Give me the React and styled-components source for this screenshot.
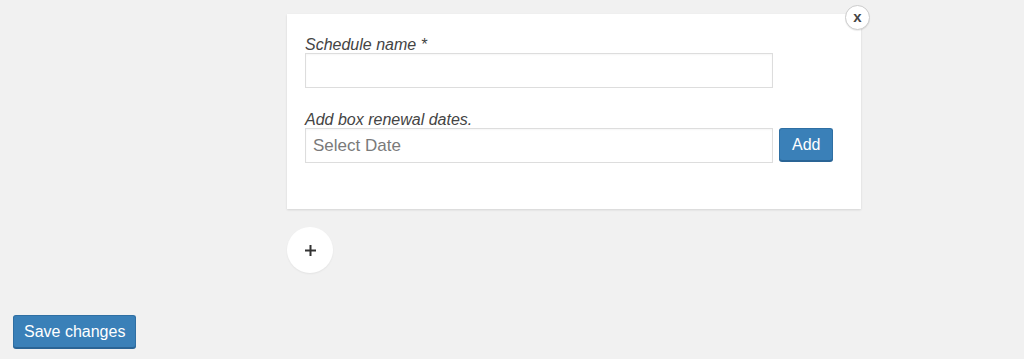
import styled, { createGlobalStyle } from 'styled-components';

const Global = createGlobalStyle`
  html, body { margin: 0; background: #f1f1f1; }
  body { font-family: "Liberation Sans", Arial, sans-serif; color: #444; }
`;

const Page = styled.div`
  width: 1024px;
  height: 359px;
  box-sizing: border-box;
  padding: 14px 0 0 13px;
  display: flex;
  flex-direction: column;
`;

const Schedules = styled.div`
  margin-left: 274px;
  display: flex;
  flex-direction: column;
  align-items: flex-start;
`;

const Card = styled.div`
  position: relative;
  width: 574px;
  height: 195px;
  box-sizing: border-box;
  padding: 22px 18px 0;
  background: #fff;
  box-shadow: 0 1px 2px rgba(0,0,0,0.12);
`;

const Close = styled.button`
  position: absolute;
  top: -9px;
  right: -9px;
  width: 25px;
  height: 25px;
  border-radius: 50%;
  border: 1px solid #ccc;
  background: #fff;
  color: #444;
  font: bold 15px "Liberation Sans", Arial, sans-serif;
  padding: 0 0 2px;
  display: grid;
  place-items: center;
  box-shadow: 0 1px 1px rgba(0,0,0,0.08);
`;

const Label = styled.label`
  display: block;
  font-style: italic;
  font-size: 16px;
  line-height: 17px;
  color: #444;
`;

const Field = styled.div`
  margin-bottom: ${p => p.$gap || 0}px;
`;

const Row = styled.div`
  display: flex;
  align-items: flex-start;
  gap: 6px;
`;

const Input = styled.input`
  display: block;
  width: 468px;
  height: 35px;
  box-sizing: border-box;
  border: 1px solid #ddd;
  box-shadow: inset 0 1px 2px rgba(0,0,0,0.04);
  background: #fff;
  padding: 0 7px;
  font: 17px "Liberation Sans", Arial, sans-serif;
  color: #333;
  outline: none;
  &::placeholder { color: #7a7a7a; }
`;

const Button = styled.button`
  height: ${p => p.$h || 33}px;
  padding: 0 ${p => p.$px || 12}px;
  background: #3a80b8;
  border: 1px solid #2f6fa3;
  border-bottom-color: #2a6495;
  border-radius: 3px;
  box-shadow: 0 1px 0 #2a6495;
  color: #fff;
  font: 16px "Liberation Sans", Arial, sans-serif;
  cursor: pointer;
`;

const AddMore = styled.button`
  margin-top: 18px;
  width: 46px;
  height: 46px;
  border-radius: 50%;
  border: none;
  background: #fff;
  box-shadow: 0 1px 2px rgba(0,0,0,0.06);
  display: grid;
  place-items: center;
  padding: 0;
`;

const Footer = styled.div`
  margin-top: 42px;
`;

export default function App() {
  return (
    <>
      <Global />
      <Page>
        <Schedules>
          <Card>
            <Close>x</Close>
            <Field $gap={23}>
              <Label>Schedule name *</Label>
              <Input />
            </Field>
            <Field>
              <Label>Add box renewal dates.</Label>
              <Row>
                <Input placeholder="Select Date" />
                <Button $h={33} $px={12}>Add</Button>
              </Row>
            </Field>
          </Card>
          <AddMore>
            <svg width="13" height="13" viewBox="0 0 13 13">
              <path d="M6.5 1v11M1 6.5h11" stroke="#333" strokeWidth="2" />
            </svg>
          </AddMore>
        </Schedules>
        <Footer>
          <Button $h={33} $px={10}>Save changes</Button>
        </Footer>
      </Page>
    </>
  );
}
